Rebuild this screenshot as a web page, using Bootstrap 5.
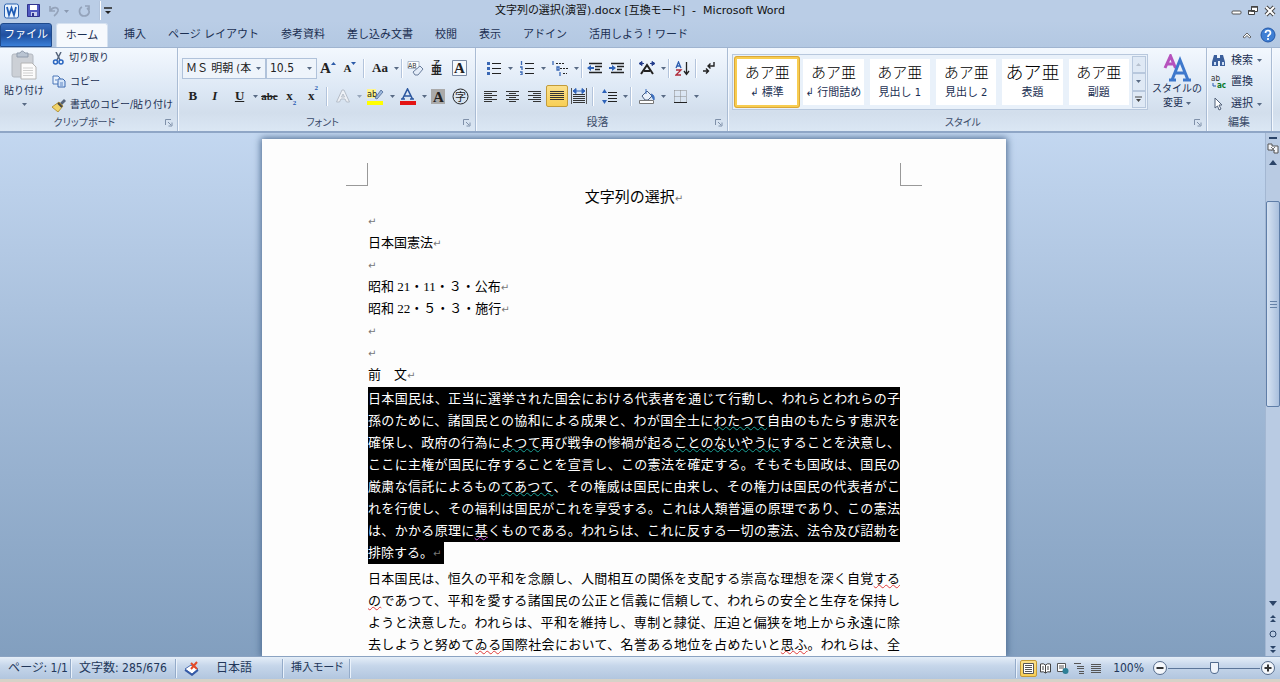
<!DOCTYPE html>
<html lang="ja">
<head>
<meta charset="utf-8">
<meta name="viewport" content="width=device-width, initial-scale=1">
<title>文字列の選択(演習).docx - Microsoft Word</title>
<link href="https://cdn.jsdelivr.net/npm/bootstrap@5.3.0/dist/css/bootstrap.min.css" rel="stylesheet">
<style>
body{font-family:"DejaVu Sans Condensed","Noto Sans CJK JP",sans-serif;font-size:11px;line-height:16px;color:#1b2f52;font-feature-settings:"palt";background:#d6d2c8}
button{background:none;border:0;padding:0;color:inherit;display:inline-flex;align-items:center;justify-content:center}
svg{display:block;flex:none}
.app-win{height:100vh;padding-bottom:3px}
.title-row{height:21px;background:#bacde6;color:#2a3444}
.title-text{font-family:"DejaVu Sans","Noto Sans CJK JP",sans-serif;color:#111}
.title-side{flex:1 1 0}
.tab-row{height:26px;background:linear-gradient(#bacde6,#b3c8e2)}
.tab-row button{height:24px;border-radius:3px 3px 0 0;white-space:nowrap}
.tab-list{gap:22px}
.file-tab{width:52px;color:#fff;background:linear-gradient(#3d6fbd,#1f4f9f 50%,#3a7fd8);border:1px solid #1f4a8c!important}
.home-tab{width:52px;background:#f6f9fd;border:1px solid #d5e1f0!important;border-bottom:0!important}
.ribbon{background:linear-gradient(#f3f8fe,#dde8f5 50%,#d2deec 78%,#dbe7f4);border-top:1px solid #9fb4d0;border-bottom:2px solid #8fa6c6;height:86px}
.grp{border-right:1px solid #aabcd4;box-shadow:1px 0 #f5f9fe;padding:2px 4px 0}
.grp-clip{width:178px}.grp-font{width:298px}.grp-para{width:252px}.grp-edit{width:65px}
.grp-body{height:65px}
.grp-label{height:16px;color:#3a4b69}
.small-label{font-size:10px}
.clip-list{height:63px}
.tool-row{height:28px;font-size:12px}
.icb{width:22px;height:22px}
.icd{width:33px;height:22px;justify-content:space-between}
.icd svg:first-child,.icd .glyph{margin:0 auto}
.vsep{width:1px;height:19px;margin:0 2px;background:#b3c4dc;box-shadow:1px 0 #fff}
.glyph{font-family:"Liberation Serif",serif;font-weight:700;font-size:15px;line-height:20px;color:#222;fill:#222}
.glyph-s{font-size:13px}
.glyph-xs{font-size:11px}
.tiny{font-size:7px;line-height:7px;color:#2659b0}
.on-btn{background:linear-gradient(#fbe08c,#f8cf55);border:1px solid #c29b3a;border-radius:2px}
.combo{appearance:none;height:21px;border:1px solid #b0c2da;border-radius:0;background:#eef4fb url("data:image/svg+xml,%3Csvg xmlns='http://www.w3.org/2000/svg' width='5' height='3'%3E%3Cpath d='M0 0h5L2.500 3z' fill='%23586a84'/%3E%3C/svg%3E") no-repeat right 4px center;padding:0 3px;color:#222;font-size:12px;line-height:19px}
.combo-face{width:84px;font-size:11px}.combo-size{width:51px}
.gallery{background:#e9f1fa;border:1px solid #b8c8dd;height:56px;padding:1px}
.tile{height:52px;flex:1 1 0;min-width:0;border:3px solid #e9f1fa;background:#fff;flex-direction:column;overflow:hidden;white-space:nowrap}
.tile.chosen{border:3px solid #f8cd50;outline:1px solid #d9a73a;outline-offset:-1px;border-radius:3px}
.tile b{font-weight:300;font-size:15px;line-height:22px;color:#000}
.tile .wide{font-size:18px}
.tile span{line-height:18px}
.two-line{line-height:14px}
.gal-nav{width:14px}
.gal-nav button{flex:1;border:1px solid #b8c8dd;background:#dfe9f5}
.desk{background:linear-gradient(#c3d7f0,#a3bbd8 45%,#829fbf);min-height:0}
.canvas-area{padding-left:3px}
.sheet{width:744px;background:#fdfdfd;margin-top:6px;padding:24px 106px 0;box-shadow:0 0 7px 1px #4a688e;color:#000;font-family:"Liberation Serif","Noto Sans CJK JP",serif;font-size:13px;line-height:22px;font-feature-settings:normal}
.sheet p{margin:0}
.corners{margin:0 -22px}
.corner{width:22px;height:23px;border:0 solid #999;border-bottom-width:1px}
.corner-l{border-right-width:1px}.corner-r{border-left-width:1px}
.sheet .doc-title{text-align:center;font-size:15px;margin-bottom:2px}
.sheet .pre-sel{margin-bottom:2px}
.sheet .sel-tail{margin-bottom:4px}
.sheet .full-lines{text-align:justify;text-align-last:justify}
.picked{background:#000;color:#fff;padding:4px 0}
.sel-tail .picked{padding-right:3px}
.ret{font-family:"DejaVu Sans",sans-serif;font-size:10px;line-height:10px;color:#777}
.wavy-t,.wavy-r,.wavy-p{text-decoration:underline wavy 1px #1aa39a;text-underline-offset:1px;text-decoration-skip-ink:none}
.wavy-r{text-decoration-color:#e03a3a}.wavy-p{text-decoration-color:#c050d0}
.scroller{width:15px;background:#b9cbe3;border-left:1px solid #a3b7d2;color:#2b4468}
.scroller button{width:14px;height:15px}
.thumb{height:206px;background:linear-gradient(90deg,#d5e2f2,#a9bfdd);border:1px solid #5f7ea8;border-radius:2px}
.above{flex:8}.below{flex:48}
.status{height:23px;background:linear-gradient(#e5eef8,#c6d6ea 40%,#b2c6df);border-top:1px solid #8ba3c2;font-size:12px;color:#22375a}
.ssep{width:1px;height:19px;background:#94abc9;box-shadow:1px 0 #eaf2fb}
.st-page{width:70px}.st-count{width:104px}.st-lang{width:106px}.st-mode{width:66px;font-size:11px}
.view-b{width:17px;height:17px}
.zoomer{appearance:none;width:92px;height:16px;background:linear-gradient(#5c7699,#5c7699) center/100% 1px no-repeat;margin:0}
.zoomer::-webkit-slider-thumb{appearance:none;width:9px;height:12px;background:#eef3fa;border:1px solid #526b8e;border-radius:1px 1px 5px 5px}
</style>
</head>
<body>
<svg width="0" height="0" class="position-absolute" aria-hidden="true">
<symbol id="dn" viewBox="0 0 5 3"><path d="M0 0h5L2.500 3z" fill="#586a84"/></symbol>
<symbol id="launch" viewBox="0 0 8 8"><path d="M.5 6V.5H6M3 3l3 3M7 3.500V7H3.500" fill="none" stroke="#7f90a9"/></symbol>
</svg>
<div class="app-win d-flex flex-column">

<header class="title-row d-flex align-items-center px-1">
  <div class="title-side d-flex align-items-center gap-1">
    <svg class="me-1" width="15" height="16" viewBox="0 0 15 16"><rect x=".5" y="1" width="14" height="14" rx="2" fill="#eaf3fd" stroke="#2b62b0"/><path d="M3 4l2 8 2.500-7L10 12l2-8" fill="none" stroke="#1f5cb5" stroke-width="1.800"/></svg>
    <button aria-label="上書き保存"><svg width="13" height="13"><path d="M.5.5h12v12h-12z" fill="#5059c0" stroke="#30338e"/><path d="M3 1h7v5H3z" fill="#fff"/><path d="M4 8h6v4H4z" fill="#c7cdec"/><path d="M5 9h2v3H5z" fill="#30338e"/></svg></button>
    <button class="ms-1" aria-label="元に戻す"><svg width="22" height="12"><path d="M2 1v5h5M2.500 5.500C5 1 11 2 10 6q-1 3-4 5" fill="none" stroke="#94a3ba" stroke-width="1.700"/><path d="M16 5h5l-2.500 3z" fill="#8a99b0"/></svg></button>
    <button class="ms-1" aria-label="繰り返し"><svg width="13" height="12"><path d="M4 2C0 4 1 11 6 11s7-5 3-8M7 1h4v4" fill="none" stroke="#94a3ba" stroke-width="1.700"/></svg></button>
    <div class="vsep ms-1 me-0"></div>
    <button aria-label="カスタマイズ"><svg width="8" height="8"><path d="M0 1h8" stroke="#222" stroke-width="1.500"/><path d="M1 4h6L4 7z" fill="#222"/></svg></button>
  </div>
  <div class="title-text">文字列の選択(演習).docx [互換モード]&nbsp; -&nbsp; Microsoft Word</div>
  <div class="title-side d-flex gap-1 justify-content-end">
    <button aria-label="最小化"><svg width="12" height="12"><rect x="1" y="6" width="9" height="3" rx="1" fill="#fff" stroke="#555"/></svg></button>
    <button aria-label="元のサイズ"><svg width="13" height="12"><path d="M4.500 1.500h6v5h-6zM1.500 5.500h6v4h-6z" fill="#fff" stroke="#444"/><path d="M4 2h7M1 6h7" stroke="#444" stroke-width="1.500"/></svg></button>
    <button aria-label="閉じる"><svg width="12" height="12"><path d="M2 2l8 8M10 2l-8 8" stroke="#444" stroke-width="4"/><path d="M2 2l8 8M10 2l-8 8" stroke="#fff" stroke-width="2"/></svg></button>
  </div>
</header>

<nav class="tab-row d-flex align-items-end">
  <button class="file-tab">ファイル</button>
  <button class="home-tab ms-1">ホーム</button>
  <div class="tab-list d-flex ms-3">
    <button>挿入</button><button>ページ レイアウト</button><button>参考資料</button><button>差し込み文書</button><button>校閲</button><button>表示</button><button>アドイン</button><button>活用しよう！ワード</button>
  </div>
  <div class="ms-auto d-flex gap-2 me-1">
    <button aria-label="リボンの最小化"><svg width="10" height="8"><path d="M1 6l4-4 4 4-1.500 1L5 4.500 2.500 7z" fill="#fff" stroke="#444" stroke-width=".8"/></svg></button>
    <button aria-label="ヘルプ"><svg width="16" height="16"><circle cx="8" cy="8" r="7" fill="#3f7fd4" stroke="#2458a8"/><path d="M5.500 6q0-2.500 2.500-2.500T10.500 6q0 1-1.500 2-1 .6-1 2M8 11v2" fill="none" stroke="#fff" stroke-width="1.700"/></svg></button>
  </div>
</nav>

<section class="ribbon d-flex">
  <div class="grp grp-clip">
    <div class="grp-body d-flex gap-1">
      <button class="flex-column justify-content-start me-1 text-nowrap small-label">
        <svg width="28" height="33" viewBox="0 0 28 33"><rect x="2" y="4" width="21" height="23" rx="2" fill="#ccd0d6" stroke="#b2b8c0"/><path d="M7 3h3q2-4 5 0h3v4H7z" fill="#b9c4d2" stroke="#8f9bac"/><path d="M11 13h11l4 4v12H11z" fill="#fbfbfb" stroke="#b4b4b4"/><path d="M13 18h10M13 20.500h10M13 23h10M13 25.500h10" stroke="#cfcfcf"/></svg>
        貼り付け<svg class="mt-1" width="5" height="3"><use href="#dn"/></svg></button>
      <div class="clip-list d-flex flex-column align-items-start justify-content-between text-nowrap small-label">
        <button class="gap-1"><svg width="13" height="13"><path d="M4 0l4 8M9 0L5 8" stroke="#56657c" stroke-width="1.500"/><circle cx="3.500" cy="10" r="2" fill="none" stroke="#2a66c0" stroke-width="1.500"/><circle cx="9" cy="10" r="2" fill="none" stroke="#2a66c0" stroke-width="1.500"/></svg>切り取り</button>
        <button class="gap-1"><svg width="14" height="13"><path d="M1 1h5l2 2v6H1z" fill="#e8f1fc" stroke="#4a76b8"/><path d="M6 4h5l2 2v6H6z" fill="#d5e5f9" stroke="#3b69b0"/><path d="M8 8h3M8 10h3M3 5h2" stroke="#5c86c4"/></svg>コピー</button>
        <button class="gap-1"><svg width="14" height="13"><path d="M8 4l4-4 2 2-4 4z" fill="#56657c"/><path d="M7 3l4 4-5 6-6-5z" fill="#f0d368" stroke="#a8852a" stroke-width=".8"/><path d="M6 4l4 4" stroke="#444" stroke-width="2"/></svg>書式のコピー/貼り付け</button>
      </div>
    </div>
    <div class="grp-label d-flex align-items-center"><span class="flex-grow-1 text-center small-label">クリップボード</span><button aria-label="クリップボードの詳細"><svg width="8" height="8"><use href="#launch"/></svg></button></div>
  </div>

  <div class="grp grp-font">
    <div class="grp-body pt-1">
      <div class="tool-row d-flex align-items-center">
        <select class="combo combo-face" aria-label="フォント"><option>ＭＳ 明朝 (本</option></select>
        <select class="combo combo-size" aria-label="フォント サイズ"><option>10.5</option></select>
        <button class="icb glyph" aria-label="拡大">A<svg width="5" height="12"><path d="M0 3h5L2.500 0z" fill="#2c5aa8"/></svg></button>
        <button class="icb glyph glyph-xs" aria-label="縮小">A<svg width="5" height="12"><path d="M0 0h5L2.500 3z" fill="#2c5aa8"/></svg></button>
        <div class="vsep"></div>
        <button class="icd" aria-label="文字種の変換"><span class="glyph glyph-s">Aa</span><svg width="5" height="3"><use href="#dn"/></svg></button>
        <div class="vsep"></div>
        <button class="icb" aria-label="書式のクリア"><svg width="17" height="16"><path d="M1 1.500h11v7H1z" fill="#fff" stroke="#91a0b6" stroke-width=".7"/><text x="1" y="8" font-size="7" fill="#333">AB</text><path d="M6 12l7-6 3 3-5 6H8z" fill="#e3ecf8" stroke="#6a7e9c"/></svg></button>
        <button class="icb" aria-label="ルビ"><svg width="16" height="22"><text x="4" y="8" font-size="7" font-weight="700" fill="#222">ア</text><text x="2" y="17" font-size="11" font-weight="700" fill="#222">亜</text></svg></button>
        <button class="icb" aria-label="囲み線"><svg width="15" height="16"><path d="M.5.500h14v15H.5z" fill="#f5f9fd" stroke="#7b8ba5"/><text class="glyph" x="2" y="13">A</text></svg></button>
      </div>
      <div class="tool-row d-flex align-items-center">
        <button class="icb glyph glyph-s" aria-label="太字">B</button>
        <button class="icb glyph glyph-s fst-italic" aria-label="斜体">I</button>
        <button class="icd" aria-label="下線"><span class="glyph glyph-s text-decoration-underline">U</span><svg width="5" height="3"><use href="#dn"/></svg></button>
        <button class="icb glyph glyph-xs text-decoration-line-through" aria-label="取り消し線">abc</button>
        <button class="icb glyph glyph-s" aria-label="下付き">x<span class="tiny align-self-end">2</span></button>
        <button class="icb glyph glyph-s" aria-label="上付き">x<span class="tiny align-self-start">2</span></button>
        <div class="vsep"></div>
        <button class="icd" aria-label="文字の効果"><svg width="16" height="16"><path d="M1.500 14L7 2h2l5.500 12h-3l-1.500-3H6l-1.500 3zM8 6l1.500 3h-3z" fill="#eef1f6" stroke="#b6bec9"/></svg><svg width="5" height="3" opacity=".5"><use href="#dn"/></svg></button>
        <button class="icd" aria-label="蛍光ペン"><svg width="17" height="17"><path d="M0 1h9v9H0z" fill="#fff58a"/><text x="0" y="9" font-size="9" fill="#222">ab</text><path d="M8 10l6-8 2 2-6 7z" fill="#9db8dc" stroke="#4d6a96" stroke-width=".8"/><path d="M0 13h16v4H0z" fill="#ffff00"/></svg><svg width="5" height="3"><use href="#dn"/></svg></button>
        <button class="icd" aria-label="フォントの色"><svg width="16" height="17"><path d="M2.500 11L7.500 1l5 10M4.500 8h6M1 11h4M10 11h4" fill="none" stroke="#2b579f" stroke-width="1.600"/><path d="M0 13h16v4H0z" fill="#e31414"/></svg><svg width="5" height="3"><use href="#dn"/></svg></button>
        <button class="icb" aria-label="網かけ"><svg width="14" height="15"><path d="M0 0h14v15H0z" fill="#aaa"/><text class="glyph" x="2" y="13">A</text></svg></button>
        <button class="icb" aria-label="囲い文字"><svg width="17" height="17"><circle cx="8.500" cy="8.500" r="7.500" fill="none" stroke="#222"/><text x="3" y="13" font-size="11" fill="#222">字</text></svg></button>
      </div>
    </div>
    <div class="grp-label d-flex align-items-center"><span class="flex-grow-1 text-center small-label">フォント</span><button aria-label="フォントの詳細"><svg width="8" height="8"><use href="#launch"/></svg></button></div>
  </div>

  <div class="grp grp-para">
    <div class="grp-body pt-1">
      <div class="tool-row d-flex align-items-center">
        <button class="icd" aria-label="箇条書き"><svg width="14" height="14"><path d="M5 2.500h9M5 7.500h9M5 12.500h9" stroke="#222"/><path d="M0 1h3v3H0zM0 6h3v3H0zM0 11h3v3H0z" fill="#3a68b5"/></svg><svg width="5" height="3"><use href="#dn"/></svg></button>
        <button class="icd" aria-label="段落番号"><svg width="14" height="14"><path d="M5 2.500h9M5 7.500h9M5 12.500h9" stroke="#222"/><path d="M1.500 0v4M0 6h2v3M0 11h2v3H0" fill="none" stroke="#3a68b5" stroke-width="1.300"/></svg><svg width="5" height="3"><use href="#dn"/></svg></button>
        <button class="icd" aria-label="アウトライン"><svg width="16" height="15"><path d="M4 2.500h9M8 7.500h8M11 12.500h4" stroke="#222" stroke-dasharray="2 1"/><path d="M1 0v4M5 6h2v3H5zM8 11v4" fill="none" stroke="#3a68b5" stroke-width="1.300"/></svg><svg width="5" height="3"><use href="#dn"/></svg></button>
        <div class="vsep"></div>
        <button class="icb" aria-label="インデント解除"><svg width="16" height="13"><path d="M2 1.500h13M8 4.500h7M8 7.500h5M2 10.500h13" stroke="#222" stroke-width="1.600"/><path d="M0 6l4-3v2h3v2H4v2z" fill="#2e62b8"/></svg></button>
        <button class="icb" aria-label="インデント"><svg width="16" height="13"><path d="M2 1.500h13M8 4.500h7M8 7.500h5M2 10.500h13" stroke="#222" stroke-width="1.600"/><path d="M7 6L3 3v2H0v2h3v2z" fill="#2e62b8"/></svg></button>
        <div class="vsep"></div>
        <button class="icd" aria-label="拡張書式"><svg width="16" height="14"><path d="M2 13l6-9 6 9M5 10h6" fill="none" stroke="#222" stroke-width="2"/><path d="M0 2.500l3-2v4zM16 2.500l-3-2v4zM2 2.500h3M11 2.500h3" fill="#243d8c" stroke="#243d8c"/></svg><svg width="5" height="3"><use href="#dn"/></svg></button>
        <div class="vsep"></div>
        <button class="icb" aria-label="並べ替え"><svg width="15" height="15"><path d="M1 7l2.500-6L6 7M2 5h3" fill="none" stroke="#2b5db0" stroke-width="1.300"/><path d="M1 9h5l-5 5h5" fill="none" stroke="#b02a3a" stroke-width="1.300"/><path d="M11.500 1v12M9 10l2.500 3.500L14 10" fill="none" stroke="#222" stroke-width="1.300"/></svg></button>
        <div class="vsep"></div>
        <button class="icb" aria-label="編集記号"><svg width="12" height="13"><path d="M11 0v4H5M7.500 1.500L5 4l2.500 2.500M0 9h5M3 6.500L5.500 9 3 11.500" fill="none" stroke="#222" stroke-width="1.400"/></svg></button>
      </div>
      <div class="tool-row d-flex align-items-center">
        <button class="icb" aria-label="左揃え"><svg width="14" height="12"><path d="M0 1.500h13M0 5.500h13M0 9.500h13M0 3.500h8M0 7.500h8M0 11.500h8" stroke="#333"/></svg></button>
        <button class="icb" aria-label="中央揃え"><svg width="14" height="12"><path d="M0 1.500h13M0 5.500h13M0 9.500h13M3 3.500h7M3 7.500h7M3 11.500h7" stroke="#333"/></svg></button>
        <button class="icb" aria-label="右揃え"><svg width="14" height="12"><path d="M0 1.500h13M0 5.500h13M0 9.500h13M5 3.500h8M5 7.500h8M5 11.500h8" stroke="#333"/></svg></button>
        <button class="icb on-btn" aria-label="両端揃え"><svg width="14" height="12"><path d="M0 1.500h14M0 3.500h14M0 5.500h14M0 7.500h14M0 9.500h14" stroke="#333"/></svg></button>
        <button class="icb" aria-label="均等割り付け"><svg width="16" height="16"><path d="M.5 0v16M15.500 0v16" stroke="#555"/><path d="M2 6.500h12M2 8.500h12M2 10.500h12M2 12.500h12M2 14.500h12" stroke="#333"/><path d="M2 3l3-2.500v5zM14 3l-3-2.500v5zM4 3h8" fill="#2e62b8" stroke="#2e62b8"/></svg></button>
        <div class="vsep"></div>
        <button class="icd" aria-label="行間"><svg width="15" height="15"><path d="M6 3.500h9M6 6.500h9M6 9.500h9M6 12.500h9" stroke="#222"/><path d="M2.500 1v4M2.500 10v4M0 4l2.500-4L5 4zM0 11l2.500 4L5 11z" fill="#2e62b8"/></svg><svg width="5" height="3"><use href="#dn"/></svg></button>
        <div class="vsep"></div>
        <button class="icd" aria-label="塗りつぶし"><svg width="17" height="15"><path d="M3 7l5-5 5 5-4 4H6z" fill="#e9f0fa" stroke="#4a5f80"/><path d="M7 0v5M12 5q4 1 3 6l-2-3" fill="#3b6fc0" stroke="#3b6fc0"/><path d="M.5 11.500h14v3H.5z" fill="#fff" stroke="#777"/></svg><svg width="5" height="3"><use href="#dn"/></svg></button>
        <button class="icd" aria-label="罫線"><svg width="13" height="13"><path d="M.5.500h12M.5 6.500h12M.5.500v12M6.500.500v12M12.500.500v12" stroke="#888" stroke-dasharray="1 1"/><path d="M0 12.500h13" stroke="#222"/></svg><svg width="5" height="3"><use href="#dn"/></svg></button>
      </div>
    </div>
    <div class="grp-label d-flex align-items-center"><span class="flex-grow-1 text-center">段落</span><button aria-label="段落の詳細"><svg width="8" height="8"><use href="#launch"/></svg></button></div>
  </div>

  <div class="grp flex-grow-1">
    <div class="grp-body d-flex pt-1">
      <div class="gallery d-flex flex-grow-1">
        <button class="tile chosen"><b>あア亜</b><span>↲ 標準</span></button>
        <button class="tile"><b>あア亜</b><span>↲ 行間詰め</span></button>
        <button class="tile"><b>あア亜</b><span>見出し 1</span></button>
        <button class="tile"><b>あア亜</b><span>見出し 2</span></button>
        <button class="tile"><b class="wide">あア亜</b><span>表題</span></button>
        <button class="tile"><b>あア亜</b><span>副題</span></button>
        <div class="gal-nav d-flex flex-column">
          <button aria-label="前へ"><svg width="5" height="3"><path d="M0 3h5L2.500 0z" fill="#b6c0ce"/></svg></button>
          <button aria-label="次へ"><svg width="5" height="3"><use href="#dn"/></svg></button>
          <button aria-label="その他"><svg width="7" height="7"><path d="M0 1h7" stroke="#444"/><path d="M1 3h5L3.500 6z" fill="#444"/></svg></button>
        </div>
      </div>
      <button class="flex-column justify-content-start ms-1 text-nowrap small-label">
        <svg width="28" height="28"><path d="M2 14L7.500 2l5 12M4 10h7" fill="none" stroke="#b652bd" stroke-width="3"/><path d="M9 26L17 6l8 20M12 19h11M6 26h7M20 26h8" fill="none" stroke="#3e78cc" stroke-width="3"/></svg>
        <span class="two-line">スタイルの<br>変更 <svg class="d-inline" width="5" height="3"><use href="#dn"/></svg></span></button>
    </div>
    <div class="grp-label d-flex align-items-center"><span class="flex-grow-1 text-center small-label">スタイル</span><button aria-label="スタイルの詳細"><svg width="8" height="8"><use href="#launch"/></svg></button></div>
  </div>

  <div class="grp grp-edit">
    <div class="grp-body d-flex flex-column align-items-start justify-content-around text-nowrap">
      <button class="gap-1"><svg width="16" height="13"><path d="M3 1h3v3h3V1h3l2 7v4H9V7H7v5H1V8z" fill="#3b5f9c"/><path d="M3 8h2v3H3zM11 8h2v3h-2z" fill="#cfe0f6"/></svg>検索 <svg width="5" height="3"><use href="#dn"/></svg></button>
      <button class="gap-1"><svg width="16" height="14"><text x="0" y="6" font-size="8" fill="#333">ab</text><text x="6" y="13" font-size="8" fill="#0b7a2a" font-weight="700">ac</text><path d="M2 8v3h3" fill="none" stroke="#2659b0"/></svg>置換</button>
      <button class="gap-1"><svg width="16" height="14"><path d="M4 1v10l2.500-2L8 13l2-1-2-4h3z" fill="#fff" stroke="#53627a"/></svg>選択 <svg width="5" height="3"><use href="#dn"/></svg></button>
    </div>
    <div class="grp-label text-center">編集</div>
  </div>
  <div class="ps-2"></div>
</section>

<main class="desk flex-grow-1 d-flex overflow-hidden">
  <div class="canvas-area flex-grow-1 overflow-hidden d-flex justify-content-center">
    <article class="sheet flex-shrink-0">
      <div class="corners d-flex justify-content-between"><div class="corner corner-l"></div><div class="corner corner-r"></div></div>
      <p class="doc-title">文字列の選択<span class="ret">↵</span></p>
      <p><span class="ret">↵</span></p>
      <p>日本国憲法<span class="ret">↵</span></p>
      <p><span class="ret">↵</span></p>
      <p>昭和 21・11・３・公布<span class="ret">↵</span></p>
      <p>昭和 22・５・３・施行<span class="ret">↵</span></p>
      <p><span class="ret">↵</span></p>
      <p><span class="ret">↵</span></p>
      <p class="pre-sel">前　文<span class="ret">↵</span></p>
      <p class="full-lines"><span class="picked">日本国民は、正当に選挙された国会における代表者を通じて行動し、われらとわれらの子<br>孫のために、諸国民との協和による成果と、わが国全土に<span class="wavy-t">わたつて</span>自由のもたらす恵沢を<br>確保し、政府の行為に<span class="wavy-t">よつて</span>再び戦争の惨禍が起る<span class="wavy-t">ことのないやうに</span>することを決意し、<br>ここに主権が国民に存することを宣言し、この憲法を確定する。そもそも国政は、国民の<br>厳粛な信託によるもの<span class="wavy-t">てあつて</span>、その権威は国民に由来し、その権力は国民の代表者がこ<br>れを行使し、その福利は国民がこれを享受する。これは人類普遍の原理であり、この憲法<br>は、かかる原理に<span class="wavy-p">基</span>くものである。われらは、これに反する一切の憲法、法令及び詔勅を</span></p>
      <p class="sel-tail"><span class="picked">排除する。<span class="ret">↵</span></span></p>
      <p class="full-lines">日本国民は、恒久の平和を念願し、人間相互の関係を支配する崇高な理想を深く自覚<span class="wavy-r">する<br>の</span>であつて、平和を愛する諸国民の公正と信義に信頼して、われらの安全と生存を保持し<br>ようと決意した。われらは、平和を維持し、専制と隷従、圧迫と偏狭を地上から永遠に除<br>去しようと努めて<span class="wavy-r">ゐる</span>国際社会において、名誉ある地位を占めたいと<span class="wavy-r">思ふ</span>。われらは、全</p>
    </article>
  </div>
  <aside class="scroller d-flex flex-column flex-shrink-0 align-items-stretch pt-1">
    <svg class="mx-auto" width="8" height="3"><path d="M0 1h8" stroke="#2b4468" stroke-width="2"/></svg>
    <button aria-label="ルーラー"><svg width="12" height="12"><path d="M1 2h4v2h6v7H7V8H1z" fill="#f4f6fa" stroke="#555"/><path d="M4 5l4 4M8 5L4 9" stroke="#777"/></svg></button>
    <button aria-label="上へ"><svg width="8" height="5"><path d="M0 5h8L4 0z" fill="#2b4468"/></svg></button>
    <div class="flex-grow-1 d-flex flex-column"><div class="above"></div>
      <div class="thumb d-flex align-items-center justify-content-center"><svg width="7" height="7"><path d="M0 .500h7M0 3.500h7M0 6.500h7" stroke="#6682a8"/></svg></div>
      <div class="below"></div></div>
    <button aria-label="下へ"><svg width="8" height="5"><path d="M0 0h8L4 5z" fill="#2b4468"/></svg></button>
    <button aria-label="前のページ"><svg width="6" height="8"><path d="M0 3h6L3 0zM0 7h6L3 4z" fill="#2b4468"/></svg></button>
    <button aria-label="ブラウズ対象"><svg width="8" height="8"><circle cx="4" cy="4" r="3" fill="none" stroke="#2b4468"/></svg></button>
    <button aria-label="次のページ"><svg width="6" height="8"><path d="M0 1h6L3 4zM0 5h6L3 8z" fill="#2b4468"/></svg></button>
  </aside>
</main>

<footer class="status d-flex align-items-center text-nowrap">
  <div class="st-page ps-2">ページ: 1/1</div><div class="ssep"></div>
  <div class="st-count ps-2">文字数: 285/676</div><div class="ssep"></div>
  <div class="st-lang ps-2 d-flex align-items-center gap-3"><svg width="16" height="15"><path d="M1 8l6-4 7 4-6 5z" fill="#fff" stroke="#4569b0"/><path d="M1 9l7 5 6-5" fill="none" stroke="#3459a6" stroke-width="1.700"/><path d="M7 2l6 6M13 1L7 8" stroke="#e34a28" stroke-width="2"/></svg>日本語</div><div class="ssep"></div>
  <div class="st-mode ps-2">挿入モード</div><div class="ssep"></div>
  <div class="ms-auto d-flex align-items-center">
    <div class="ssep me-1"></div>
    <button class="view-b on-btn" aria-label="印刷レイアウト"><svg width="11" height="11"><path d="M.5.500h10v10H.5z" fill="#fff" stroke="#555"/><path d="M2 2.500h7M2 4.500h7M2 6.500h7M2 8.500h7" stroke="#555"/></svg></button>
    <button class="view-b" aria-label="全画面閲覧"><svg width="11" height="11"><path d="M.5 1q3-1 5 1 2-2 5-1v8q-3-1-5 1-2-2-5-1zM5.500 2v8M2 4h2M2 6h2M7 4h2M7 6h2" fill="#fff" stroke="#444"/></svg></button>
    <button class="view-b" aria-label="Web レイアウト"><svg width="12" height="11"><path d="M.5.500h8v8h-8zM2 3h5M2 5h5" fill="#fff" stroke="#555"/><circle cx="8.500" cy="8" r="3" fill="#2d7f96"/></svg></button>
    <button class="view-b" aria-label="アウトライン表示"><svg width="11" height="11"><path d="M0 .500h7M3 3.500h7M3 5.500h7M5 8.500h5M5 10.500h5" stroke="#555"/></svg></button>
    <button class="view-b" aria-label="下書き"><svg width="11" height="11"><path d="M0 1.500h10M0 3.500h10M0 5.500h10M0 7.500h10M0 9.500h10" stroke="#555"/></svg></button>
    <button class="mx-2">100%</button>
    <button aria-label="縮小"><svg width="16" height="16"><circle cx="8" cy="8" r="6.500" fill="#f4f7fb" stroke="#556b8b"/><path d="M4.500 8h7" stroke="#333" stroke-width="2"/></svg></button>
    <input class="zoomer" type="range" min="0" max="100" value="50" aria-label="ズーム">
    <button class="me-1" aria-label="拡大"><svg width="16" height="16"><circle cx="8" cy="8" r="6.500" fill="#f4f7fb" stroke="#556b8b"/><path d="M4.500 8h7M8 4.500v7" stroke="#333" stroke-width="2"/></svg></button>
  </div>
</footer>
</div>
<script src="https://cdn.jsdelivr.net/npm/bootstrap@5.3.0/dist/js/bootstrap.bundle.min.js"></script>
</body>
</html>
